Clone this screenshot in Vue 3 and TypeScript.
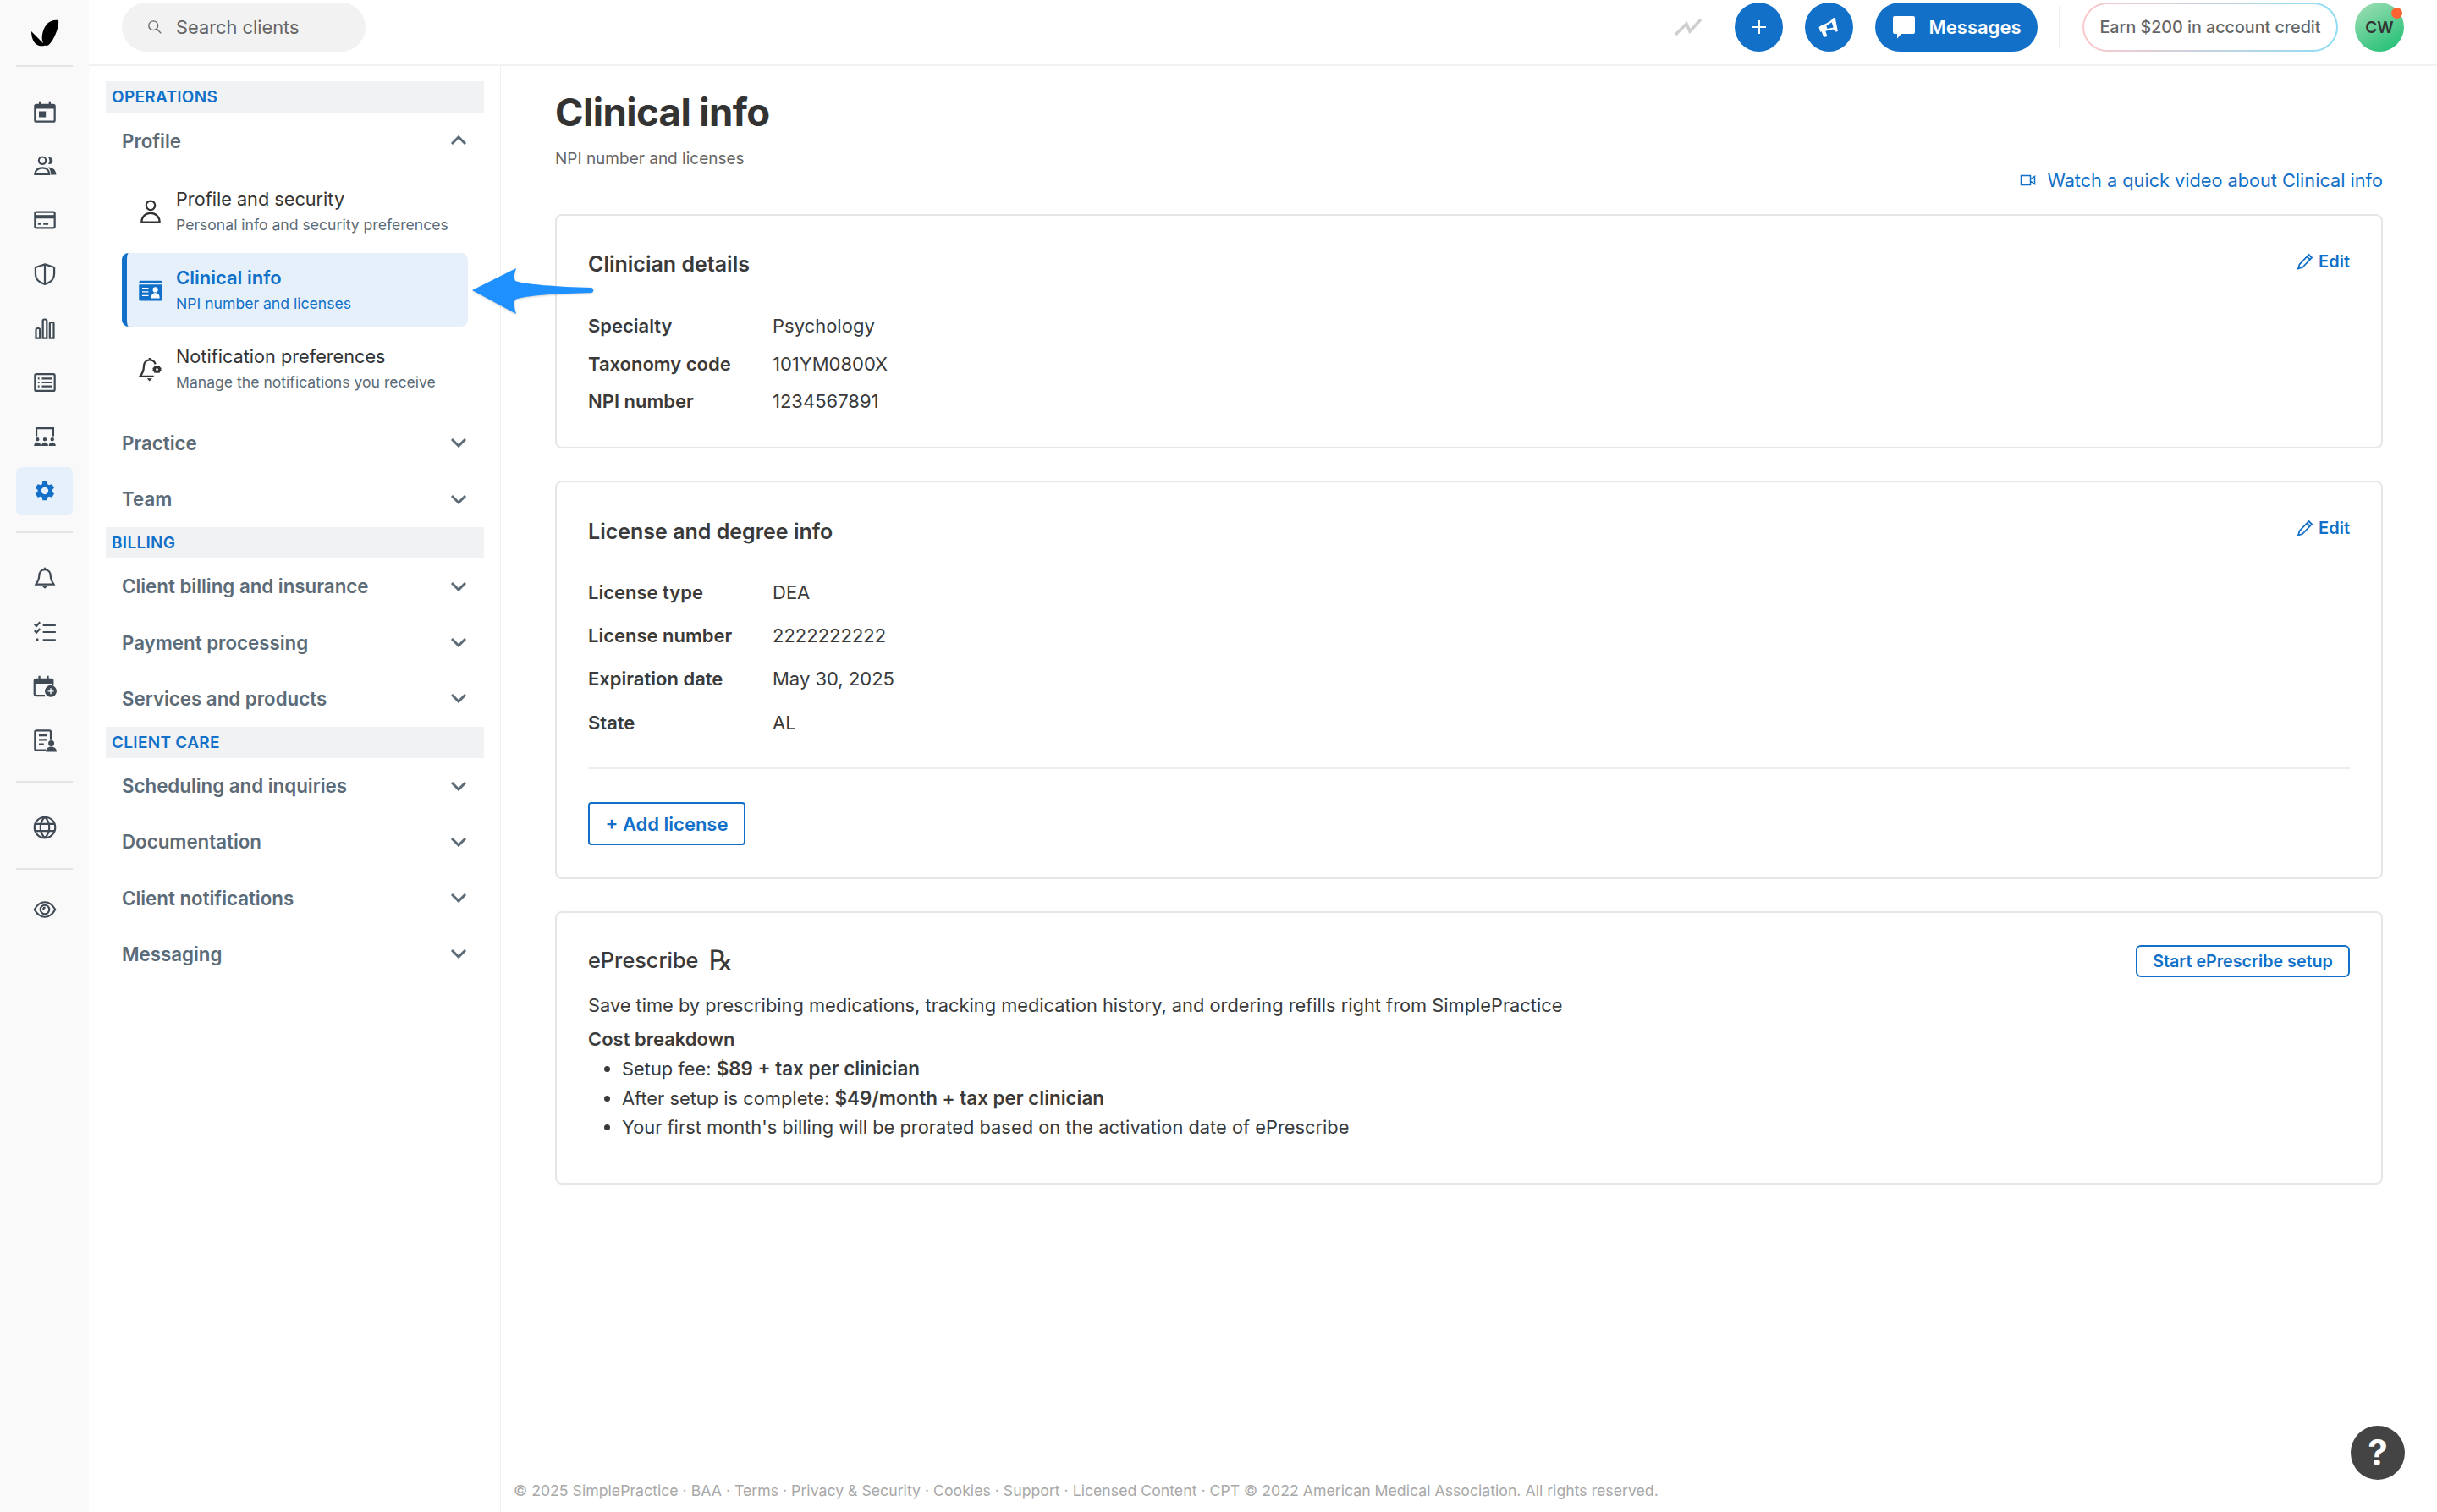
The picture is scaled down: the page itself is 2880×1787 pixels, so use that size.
<script setup lang="ts">
interface Ico { s?: string; f?: string; w?: string }
interface Cell { key: string; ico: Ico; active?: boolean }

const gear = 'M19.14 12.94c.04-.3.06-.61.06-.94 0-.32-.02-.64-.07-.94l2.03-1.58a.49.49 0 0 0 .12-.61l-1.92-3.32a.488.488 0 0 0-.59-.22l-2.39.96c-.5-.38-1.03-.7-1.62-.94l-.36-2.54a.484.484 0 0 0-.48-.41h-3.84c-.24 0-.43.17-.47.41l-.36 2.54c-.59.24-1.13.57-1.62.94l-2.39-.96c-.22-.08-.47 0-.59.22L2.74 8.87c-.12.21-.08.47.12.61l2.03 1.58c-.05.3-.09.63-.09.94s.02.64.07.94l-2.03 1.58a.49.49 0 0 0-.12.61l1.92 3.32c.12.22.37.29.59.22l2.39-.96c.5.38 1.03.7 1.62.94l.36 2.54c.05.24.24.41.48.41h3.84c.24 0 .44-.17.47-.41l.36-2.54c.59-.24 1.13-.56 1.62-.94l2.39.96c.22.08.47 0 .59-.22l1.92-3.32c.12-.22.07-.47-.12-.61l-2.01-1.58zM12 15.6c-1.98 0-3.6-1.62-3.6-3.6s1.62-3.6 3.6-3.6 3.6 1.62 3.6 3.6-1.62 3.6-3.6 3.6z'

const railA: Cell[] = [
  { key: 'cal', ico: { s: 'M3.5 5h17a1.5 1.5 0 0 1 1.5 1.5v14a1.5 1.5 0 0 1-1.5 1.5h-17A1.5 1.5 0 0 1 2 20.5v-14A1.5 1.5 0 0 1 3.5 5z', f: 'M2 5h20v4H2zM6 1.5h2V5H6zM16 1.5h2V5h-2zM6 11.5h7v6H6z' } },
  { key: 'people', ico: { s: 'M9.5 3a3.6 3.6 0 1 1 0 7.2 3.6 3.6 0 0 1 0-7.2zM2 20.5c0-4 3.4-6.5 7.5-6.5s7 2.5 7 6.5z', f: 'M16.5 3.5a3.4 3.4 0 1 1 0 6.8 3 3 0 0 1-1-.2 5.2 5.2 0 0 0 0-6.4 3 3 0 0 1 1-.2zM15.5 13.2c4 .2 8 2.6 8 7.8h-5.4c0-3.4-1-6-2.6-7.8z' } },
  { key: 'card', ico: { s: 'M3.5 4h17A1.5 1.5 0 0 1 22 5.5v13a1.5 1.5 0 0 1-1.5 1.5h-17A1.5 1.5 0 0 1 2 18.5v-13A1.5 1.5 0 0 1 3.5 4zM5 16h3.5M10.5 16h5', f: 'M2 7h20v3.5H2z' } },
  { key: 'shield', ico: { s: 'M12 2l9.5 3.2V12c0 5-4.2 8.6-9.5 10.2C6.7 20.6 2.5 17 2.500 12V5.200zM12 2v20' } },
  { key: 'bars', ico: { s: 'M3 13.500a1.500 1.500 0 0 1 1.500-1.500h1a1.500 1.500 0 0 1 1.500 1.500V22H3zM10 4.500A1.500 1.500 0 0 1 11.500 3h1A1.500 1.500 0 0 1 14 4.500V22h-4zM17 7.500A1.500 1.500 0 0 1 18.500 6h1A1.500 1.500 0 0 1 21 7.500V22h-4z' } },
  { key: 'list', ico: { s: 'M3.500 3.500h17A1.500 1.500 0 0 1 22 5v14a1.500 1.500 0 0 1-1.500 1.500h-17A1.500 1.500 0 0 1 2 19V5a1.500 1.500 0 0 1 1.500-1.500zM9 8h10M9 12h10M9 16h10M5 8h1.500M5 12h1.500M5 16h1.500' } },
  { key: 'dash', ico: { s: 'M3.500 11.500V3.500h17v8', f: 'M4.500 12.800a1.900 1.900 0 1 1 0 3.800 1.900 1.900 0 0 1 0-3.800zM12 12.800a1.900 1.900 0 1 1 0 3.800 1.900 1.900 0 0 1 0-3.800zM19.500 12.800a1.900 1.900 0 1 1 0 3.800 1.900 1.900 0 0 1 0-3.800zM1 21.500c0-2.300 1.400-3.700 3.500-3.700S8 19.200 8 21.500zM8.600 21.500c0-2.300 1.300-3.700 3.400-3.700s3.400 1.400 3.400 3.700zM16 21.500c0-2.300 1.400-3.700 3.500-3.700s3.500 1.400 3.500 3.700z' } },
  { key: 'gear', ico: { f: gear }, active: true }
]
const railB: Cell[] = [
  { key: 'bell', ico: { s: 'M12 3.500c-3.800 0-5.800 2.900-5.800 6.700 0 4.500-2.200 6.500-3.200 8.300h18c-1-1.800-3.200-3.800-3.200-8.300 0-3.800-2-6.700-5.800-6.700zM12 1.500v2', f: 'M9.500 20.500h5L12 23z' } },
  { key: 'tasks', ico: { s: 'M1.500 4l2 2 3.500-4M1.500 10.500l2 2 3.500-4M10 5h13M10 12h13M10 20h13', f: 'M3 18.500h2.500V21H3z' } },
  { key: 'calp', ico: { s: 'M3 5h15.500A1.500 1.500 0 0 1 20 6.500V11M12 21.500H3A1.500 1.500 0 0 1 1.500 20V6.500A1.500 1.500 0 0 1 3 5', f: 'M1.500 5H20v4.500H1.500zM5.500 1.500h2V5h-2zM14 1.500h2V5h-2zM18 11a6 6 0 1 1 0 12 6 6 0 0 1 0-12z', w: 'M18 14v6M15 17h6' } },
  { key: 'doc', ico: { s: 'M18 11V3.500A1.500 1.500 0 0 0 16.500 2H3.500A1.500 1.500 0 0 0 2 3.500v17A1.500 1.500 0 0 0 3.500 22H13M6 7h8.500M6 11.500h8.500M6 16h5', f: 'M18.500 12a3 3 0 1 1 0 6 3 3 0 0 1 0-6zM13 23.500c0-3 2.500-5 5.500-5s5.500 2 5.500 5z' } }
]
const railC: Cell = { key: 'globe', ico: { s: 'M12 1.500a10.500 10.500 0 1 1 0 21 10.500 10.500 0 0 1 0-21zM12 1.500c-3 2.800-4.500 6.300-4.500 10.500s1.500 7.700 4.500 10.500c3-2.800 4.500-6.300 4.500-10.500S15 4.300 12 1.500zM2 8.500h20M2 15.500h20' } }
const railD: Cell = { key: 'eye', ico: { s: 'M1.500 12C4 7.500 7.500 4.500 12 4.500s8 3 10.500 7.500c-2.500 4.500-6 7.500-10.500 7.500S4 16.500 1.500 12zM12 7.500a4.500 4.500 0 1 1 0 9 4.500 4.500 0 0 1 0-9zM10.500 12a2 2 0 0 1 2-2' } }

const subItems = [
  { title: 'Profile and security', sub: 'Personal info and security preferences', active: false, ico: { s: 'M12 2a4.200 4.200 0 1 1 0 8.400A4.200 4.200 0 0 1 12 2zM3.500 22c0-5 3.600-8.500 8.500-8.500s8.500 3.500 8.500 8.500zM3.500 22' } as Ico },
  { title: 'Clinical info', sub: 'NPI number and licenses', active: true, ico: { f: 'M2.500 3h19A1.500 1.500 0 0 1 23 4.500V5.500H1V4.500A1.500 1.500 0 0 1 2.500 3zM1 6.500h22v14a1.500 1.500 0 0 1-1.500 1.500h-19A1.500 1.500 0 0 1 1 20.500z', w: 'M4 10h6M4 13.500h6M4 17h6M16.500 9.500a2 2 0 1 1 0 4 2 2 0 0 1 0-4zM13 19c0-2.500 1.500-4 3.500-4s3.500 1.500 3.500 4z' } as Ico },
  { title: 'Notification preferences', sub: 'Manage the notifications you receive', active: false, ico: { s: 'M16.500 7.500C15.800 5 14 3.500 11 3.500c-3.500 0-5.500 2.900-5.500 6.500 0 4.500-1.800 7-3.500 9h13M11 1.500v2', f: 'M8.500 21h5L11 23.500zM18 8.500l1 .800 1.400-.3.600 1.300 1.200.8-.4 1.300.4 1.300-1.200.8-.6 1.300-1.400-.3-1 .8-1-.8-1.400.3-.6-1.300-1.200-.8.4-1.300-.4-1.300 1.200-.8.6-1.300 1.400.3z', w: 'M18 11.400a1.100 1.100 0 1 1 0 2.200 1.100 1.100 0 0 1 0-2.200z' } as Ico }
]

const footerParts = ['© 2025 SimplePractice', 'BAA', 'Terms', 'Privacy & Security', 'Cookies', 'Support', 'Licensed Content', 'CPT © 2022 American Medical Association. All rights reserved.']
const clinician = [['Specialty', 'Psychology'], ['Taxonomy code', '101YM0800X'], ['NPI number', '1234567891']]
const license = [['License type', 'DEA'], ['License number', '2222222222'], ['Expiration date', 'May 30, 2025'], ['State', 'AL']]
</script>

<template>
  <div class="app">
    <aside class="rail">
      <div class="logo">
        <svg viewBox="0 0 34 32" width="34" height="32"><path d="M33 1c1 6-3 18-8 25-2 3-4 5-7 5l-1-.500C11 25 14 12 19 6c3-4 9-6 14-5zM1 14l14 14c1 1 2 2 2 2.800-3 1-7 .700-10-1.300C3 27 1 20 1 14z" fill="#000" /></svg>
      </div>
      <div class="rail-div rail-div-first"></div>
      <div v-for="c in railA" :key="c.key" class="cell" :class="{ 'cell-on': c.active }">
        <span class="cell-bg">
          <svg class="ri" viewBox="0 0 24 24">
            <path v-if="c.ico.f" :d="c.ico.f" class="fi" />
            <path v-if="c.ico.s" :d="c.ico.s" class="st" />
            <path v-if="c.ico.w" :d="c.ico.w" class="wh" />
          </svg>
        </span>
      </div>
      <div class="rail-div"></div>
      <div v-for="c in railB" :key="c.key" class="cell">
        <span class="cell-bg">
          <svg class="ri" viewBox="0 0 24 24">
            <path v-if="c.ico.f" :d="c.ico.f" class="fi" />
            <path v-if="c.ico.s" :d="c.ico.s" class="st" />
            <path v-if="c.ico.w" :d="c.ico.w" class="wh" />
          </svg>
        </span>
      </div>
      <div class="rail-div"></div>
      <div class="cell">
        <span class="cell-bg"><svg class="ri" viewBox="0 0 24 24"><path :d="railC.ico.s" class="st" /></svg></span>
      </div>
      <div class="rail-div rail-div-tight"></div>
      <div class="cell">
        <span class="cell-bg"><svg class="ri" viewBox="0 0 24 24"><path :d="railD.ico.s" class="st" /></svg></span>
      </div>
    </aside>

    <div class="column">
      <header class="topbar">
        <div class="search">
          <svg viewBox="0 0 20 20" width="18" height="18" class="search-ico"><circle cx="8" cy="8" r="6" /><path d="M12.500 12.500L18 18" /></svg>
          <span>Search clients</span>
        </div>
        <div class="top-right">
          <svg class="spark" viewBox="0 0 32 20" width="32" height="20"><path d="M1 19L14 6l4 9L31 1" /></svg>
          <button class="round">
            <svg viewBox="0 0 20 20" width="20" height="20"><path d="M10 2v16M2 10h16" stroke="#fff" stroke-width="2" fill="none" /></svg>
          </button>
          <button class="round">
            <svg viewBox="0 0 26 26" width="27" height="27"><path d="M20 2l3 15-2 1-3.500-3L9 17l2 6-4 1-2.500-6.500L3 18l-1.500-5.500L5 10c5-1 10-4 13-8zM16 7l-6 4 1 3.500 7-1.500z" fill="#fff" fill-rule="evenodd" /></svg>
          </button>
          <button class="msg">
            <svg viewBox="0 0 28 28" width="28" height="28"><path d="M3 1h22a2 2 0 0 1 2 2v17a2 2 0 0 1-2 2H11l-5 5.500V22H3a2 2 0 0 1-2-2V3a2 2 0 0 1 2-2z" fill="#fff" /></svg>
            <span>Messages</span>
          </button>
          <span class="vline"></span>
          <button class="earn">Earn $200 in account credit</button>
          <div class="avatar">CW<i class="dot"></i></div>
        </div>
      </header>

      <div class="body">
        <nav class="side">
          <div class="head">OPERATIONS</div>
          <div class="row">
            <span>Profile</span>
            <svg class="chev" viewBox="0 0 20 12"><path d="M2 10l8-8 8 8" /></svg>
          </div>
          <div class="group">
            <div v-for="it in subItems" :key="it.title" class="item" :class="{ 'item-on': it.active }">
              <svg class="item-ico" viewBox="0 0 24 24">
                <path v-if="it.ico.f" :d="it.ico.f" class="fi" />
                <path v-if="it.ico.s" :d="it.ico.s" class="st" />
                <path v-if="it.ico.w" :d="it.ico.w" class="wh" />
              </svg>
              <div class="item-text">
                <div class="item-title">{{ it.title }}</div>
                <div class="item-sub">{{ it.sub }}</div>
              </div>
            </div>
          </div>
          <div class="row"><span>Practice</span><svg class="chev" viewBox="0 0 20 12"><path d="M2 2l8 8 8-8" /></svg></div>
          <div class="row"><span>Team</span><svg class="chev" viewBox="0 0 20 12"><path d="M2 2l8 8 8-8" /></svg></div>
          <div class="head">BILLING</div>
          <div v-for="r in ['Client billing and insurance', 'Payment processing', 'Services and products']" :key="r" class="row">
            <span>{{ r }}</span><svg class="chev" viewBox="0 0 20 12"><path d="M2 2l8 8 8-8" /></svg>
          </div>
          <div class="head">CLIENT CARE</div>
          <div v-for="r in ['Scheduling and inquiries', 'Documentation', 'Client notifications', 'Messaging']" :key="r" class="row">
            <span>{{ r }}</span><svg class="chev" viewBox="0 0 20 12"><path d="M2 2l8 8 8-8" /></svg>
          </div>
        </nav>

        <main class="main">
          <div class="page">
            <h1>Clinical info</h1>
            <p class="lead">NPI number and licenses</p>
            <div class="watch">
              <svg viewBox="0 0 20 16" width="20" height="16"><path d="M1.500 2.500h11v11h-11zM12.500 7l5-3.500v9l-5-3.500" fill="none" stroke="#1270c8" stroke-width="1.500" /></svg>
              <a>Watch a quick video about Clinical info</a>
            </div>

            <section class="card card-a">
              <div class="card-head">
                <h2>Clinician details</h2>
                <a class="edit"><svg viewBox="0 0 20 20" width="20" height="20"><path d="M14.500 2l3.500 3.500L7 17l-5 1.500L3.500 13.500zM12.500 4.500l3 3" /></svg>Edit</a>
              </div>
              <dl class="rows rows-a">
                <div v-for="r in clinician" :key="r[0]" class="kv"><dt>{{ r[0] }}</dt><dd>{{ r[1] }}</dd></div>
              </dl>
            </section>

            <section class="card card-b">
              <div class="card-head">
                <h2>License and degree info</h2>
                <a class="edit"><svg viewBox="0 0 20 20" width="20" height="20"><path d="M14.500 2l3.500 3.500L7 17l-5 1.500L3.500 13.500zM12.500 4.500l3 3" /></svg>Edit</a>
              </div>
              <dl class="rows rows-b">
                <div v-for="r in license" :key="r[0]" class="kv"><dt>{{ r[0] }}</dt><dd>{{ r[1] }}</dd></div>
              </dl>
              <hr />
              <button class="add">+ Add license</button>
            </section>

            <section class="card card-c">
              <div class="card-head card-head-c">
                <h2 class="light">ePrescribe <span class="rx">℞</span></h2>
                <button class="start">Start ePrescribe setup</button>
              </div>
              <p class="desc">Save time by prescribing medications, tracking medication history, and ordering refills right from SimplePractice</p>
              <p class="cost">Cost breakdown</p>
              <ul>
                <li>Setup fee: <b>$89 + tax per clinician</b></li>
                <li>After setup is complete: <b>$49/month + tax per clinician</b></li>
                <li>Your first month's billing will be prorated based on the activation date of ePrescribe</li>
              </ul>
            </section>
          </div>
          <footer class="foot">{{ footerParts.join(' · ') }}</footer>
        </main>
      </div>
    </div>

    <svg class="arrow" viewBox="0 0 146 58" width="146" height="58">
      <path d="M2 28L54 2c-2 6-3 11-1 15 12 4 48 7 90 8 3 1 3 5 0 6-40 1-78 3-90 8-2 4-1 10 1 17z" fill="#1e90ff" />
    </svg>
    <button class="help">?</button>
  </div>
</template>

<style scoped>
.app { position: relative; display: flex; width: 2880px; height: 1787px; overflow: hidden; background: #fff; font-family: Inter, "Liberation Sans", sans-serif; color: #333; }
.rail { width: 105px; flex: none; background: #f9f9f9; display: flex; flex-direction: column; }
.logo { height: 77px; display: flex; align-items: center; justify-content: center; padding-top: 0; }
.rail-div { height: 2px; background: #e4e4e4; margin: 16px 19px 21px; flex: none; }
.rail-div-first { margin: 0 19px 21px; }
.rail-div-tight { margin-bottom: 15px; }
.cell { height: 64px; display: flex; align-items: center; justify-content: center; flex: none; }
.cell-bg { width: 67px; height: 57px; border-radius: 7px; display: flex; align-items: center; justify-content: center; }
.cell-on .cell-bg { background: #e6f0fa; }
.ri { width: 28px; height: 28px; }
.fi { fill: #3f4a54; }
.st { fill: none; stroke: #3f4a54; stroke-width: 1.900; }
.wh { fill: #fff; stroke: #fff; stroke-width: 1.200; }
.cell-on .fi { fill: #1270c8; }

.column { flex: 1; display: flex; flex-direction: column; min-width: 0; }
.topbar { height: 78px; flex: none; border-bottom: 2px solid #f1f1f1; box-sizing: border-box; display: flex; align-items: flex-start; justify-content: space-between; padding: 3px 39px 0 39px; }
.search { width: 288px; height: 58px; box-sizing: border-box; border-radius: 29px; background: #f2f2f2; display: flex; align-items: center; gap: 16px; padding-left: 30px; font-size: 21.800px; color: #666; }
.search-ico { fill: none; stroke: #666; stroke-width: 1.500; flex: none; }
.top-right { display: flex; align-items: center; height: 58px; }
.spark { fill: none; stroke: #cfcfcf; stroke-width: 3.500px; margin-right: 39px; }
.spark path { fill: none; }
button { font-family: inherit; cursor: pointer; margin: 0; }
.round { width: 57px; height: 58px; border-radius: 50%; border: 0; padding: 0; background: #1270c8; display: flex; align-items: center; justify-content: center; margin-right: 26px; }
.msg { width: 192px; height: 58px; border-radius: 29px; border: 0; background: #1270c8; color: #fff; font-size: 22px; font-weight: 600; display: flex; align-items: center; justify-content: center; gap: 16px; padding: 0; }
.vline { width: 2px; height: 50px; background: #eee; margin: 0 26px 0 25px; }
.earn { width: 302px; height: 58px; box-sizing: border-box; border-radius: 29px; border: 2px solid transparent; padding: 0; font-size: 19.700px; font-weight: 500; color: #666; background: linear-gradient(#fff, #fff) padding-box, linear-gradient(90deg, #fbc9cb, #8edcf5) border-box; margin-right: 20px; }
.avatar { position: relative; width: 58px; height: 58px; border-radius: 50%; background: linear-gradient(150deg, #97dcb0 10%, #2cc27a 85%); display: flex; align-items: center; justify-content: center; font-size: 19px; font-weight: 600; color: #333; }
.dot { position: absolute; right: 2px; top: 6px; width: 13px; height: 13px; border-radius: 50%; background: #ff6332; }

.body { flex: 1; display: flex; min-height: 0; }
.side { width: 487px; flex: none; box-sizing: border-box; border-right: 1px solid #f0f0f0; padding: 18px 19px 0 20px; }
.head { height: 37px; line-height: 38px; background: #f1f2f4; padding-left: 7px; font-size: 19px; font-weight: 600; letter-spacing: .3px; color: #1270c8; }
.row { height: 66.250px; display: flex; align-items: center; justify-content: space-between; padding: 0 0 0 19px; margin-right: 19px; font-size: 22.300px; font-weight: 600; color: #5c6b78; }
.chev { width: 20px; height: 12px; fill: none; stroke: #5c6b78; stroke-width: 3; margin-right: 1px; }
.group { padding: 7px 19px 11px 19px; display: flex; flex-direction: column; gap: 6px; }
.item { height: 87px; box-sizing: border-box; display: flex; align-items: center; padding-left: 19px; border-radius: 8px; }
.item-on { background: #e6f0fa; border-left: 6px solid #1270c8; padding-left: 13px; }
.item-ico { width: 30px; height: 30px; flex: none; margin-right: 15px; }
.item .st { stroke: #333; stroke-width: 1.800; }
.item .fi { fill: #333; }
.item-on .fi { fill: #1270c8; }
.item-on .wh { stroke-width: 1; }
.item:not(.item-on) .wh { fill: #fff; stroke: none; }
.item-title { font-size: 21.700px; line-height: 30px; color: #333; }
.item-sub { font-size: 17.600px; line-height: 26px; margin-top: 3px; color: #5c6b78; }
.item-on .item-title { color: #1270c8; font-weight: 600; font-size: 22px; }
.item-on .item-sub { color: #1270c8; }

.main { flex: 1; min-width: 0; display: flex; flex-direction: column; }
.page { padding: 25px 64px 0 64px; flex: 1; }
h1 { margin: 0; font-size: 45.500px; line-height: 60px; font-weight: 700; color: #333; letter-spacing: -.6px; }
.lead { margin: 13px 0 0; font-size: 19px; line-height: 24px; color: #666; }
.watch { display: flex; justify-content: flex-end; align-items: center; gap: 12px; height: 26px; margin: 0 0 27px; font-size: 21.700px; color: #1270c8; }
.card { border: 2px solid #e6e6e6; border-radius: 8px; box-sizing: border-box; padding: 39px 37px 0; margin-bottom: 38px; }
.card-a { height: 277px; }
.card-b { height: 471px; padding-top: 40px; }
.card-c { height: 323px; padding-top: 38px; }
.card-head { display: flex; justify-content: space-between; align-items: flex-start; height: 36px; }
h2 { margin: 0; font-size: 25px; line-height: 36px; font-weight: 600; color: #3a3a3a; }
h2.light { font-size: 25.300px; font-weight: 500; display: flex; align-items: center; gap: 12px; }
.rx { font-family: "DejaVu Sans", sans-serif; font-size: 32px; line-height: 30px; font-weight: 400; }
.edit { display: flex; align-items: center; gap: 6px; color: #1270c8; font-size: 20px; font-weight: 600; line-height: 32px; margin-top: -1px; }
.card-b .edit { margin-top: -2px; }
.edit svg { fill: none; stroke: #1270c8; stroke-width: 1.800; }
.rows { margin: 0; font-size: 22px; }
.rows-a { padding-top: 33px; }
.rows-b { padding-top: 28px; }
.kv { display: flex; align-items: center; }
.rows-a .kv { height: 44.500px; }
.rows-b .kv { height: 51.300px; }
dt { width: 218px; font-weight: 600; color: #3a3a3a; }
dd { margin: 0; color: #3a3a3a; }
hr { border: 0; border-top: 2px solid #eee; margin: 28px 0 39px; }
.add { width: 186px; height: 51px; border: 2px solid #1270c8; border-radius: 4px; background: #fff; color: #1270c8; font-size: 22px; font-weight: 600; padding: 0; }
.card-head-c { height: 38px; }
.start { width: 253px; height: 38px; border: 2px solid #1270c8; border-radius: 6px; background: #fff; color: #1270c8; font-size: 19.700px; font-weight: 600; padding: 0; }
.desc { margin: 17px 0 0; font-size: 21.800px; line-height: 32px; color: #3a3a3a; }
.cost { margin: 8px 0 0; font-size: 22px; line-height: 32px; font-weight: 600; color: #3a3a3a; }
ul { margin: 2px 0 0; padding: 0 0 0 40px; font-size: 21.850px; line-height: 34.500px; color: #3a3a3a; }
b { font-weight: 600; font-size: 22.400px; }
.foot { padding: 0 0 14px 15px; font-size: 17.700px; line-height: 22px; color: #a8a8a8; }

.arrow { position: absolute; left: 556px; top: 315px; filter: drop-shadow(0 1px 1px rgba(0,0,0,.2)); }
.help { position: absolute; left: 2778px; top: 1685px; width: 64px; height: 64px; border: 0; border-radius: 50%; background: #444; color: #fff; font-size: 42px; font-weight: 700; line-height: 64px; padding: 0; }
</style>

<style>
html, body { margin: 0; background: #fff; }
</style>
